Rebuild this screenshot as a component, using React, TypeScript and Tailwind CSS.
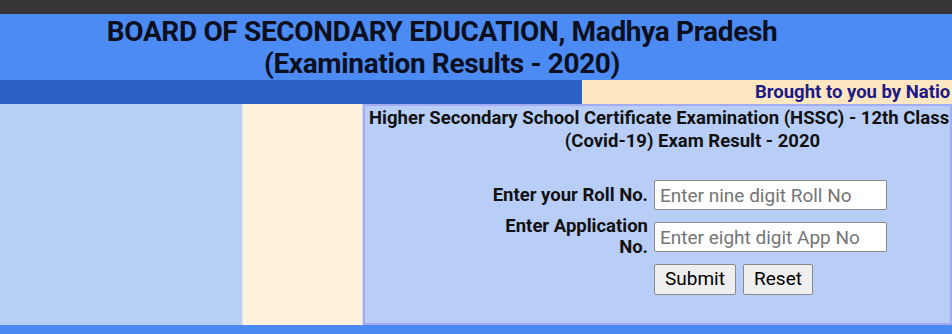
import React from 'react';

const font = { fontFamily: 'Roboto, "Noto Sans", Arial, sans-serif' };

const FormRow: React.FC<{ label: React.ReactNode; placeholder: string }> = ({ label, placeholder }) => (
  <div className="flex items-center gap-[6px]">
    <div className="w-[160px] text-right font-bold text-[18.5px] leading-[21px] text-[#111]">{label}</div>
    <input
      type="text"
      placeholder={placeholder}
      className="w-[233px] h-[30px] bg-white border border-[#8a8a8a] rounded-[2px] px-[5px] text-[19px] text-black placeholder:text-[#757575] outline-none"
    />
  </div>
);

export default function App() {
  return (
    <div className="w-[952px] h-[334px] overflow-hidden flex flex-col bg-[#b8cef6]" style={font}>
      {/* status strip */}
      <div className="h-[14px] bg-[#363638] shrink-0" />

      {/* heading */}
      <div className="h-[66px] shrink-0 bg-[#4c8bf3]">
        <div className="w-[884px] text-center font-bold text-[28px] leading-[32px] tracking-[-0.35px] text-[#0b0f1e] pt-[2px]">
          BOARD OF SECONDARY EDUCATION, Madhya Pradesh
          <br />
          (Examination Results - 2020)
        </div>
      </div>

      {/* ticker bar */}
      <div className="h-[24px] shrink-0 flex">
        <div className="w-[582px] bg-[#2c61c3]" />
        <div className="flex-1 bg-[#ffe7c1] overflow-hidden whitespace-nowrap pl-[173px] font-bold text-[18.5px] leading-[24px] text-[#1b1a86]">
          Brought to you by Natio
        </div>
      </div>

      {/* body */}
      <div className="h-[221px] shrink-0 flex">
        <div className="w-[242px] bg-[#b8cff6]" />
        <div className="w-[121px] bg-[#fff2dd] border-l border-[#dde4fb] border-r border-r-[#d2d9fb]" />
        <div className="flex-1 bg-[#b8cef6] border-2 border-[#a3acf2] overflow-hidden">
          <div className="font-bold text-[18.5px] leading-[23px] text-[#111] pt-[1px]">
            <div className="pl-[4px] whitespace-nowrap">
              Higher Secondary School Certificate Examination (HSSC) - 12th Class
            </div>
            <div className="w-[655px] text-center">(Covid-19) Exam Result - 2020</div>
          </div>

          <div className="ml-[123px] mt-[27px] flex flex-col gap-[6px]">
            <FormRow label="Enter your Roll No." placeholder="Enter nine digit Roll No" />
            <FormRow
              label={
                <>
                  Enter Application
                  <br />
                  No.
                </>
              }
              placeholder="Enter eight digit App No"
            />
            <div className="flex gap-[7px] pl-[166px]">
              <button className="h-[31px] w-[82px] bg-[#efefef] border border-[#8a8a8a] rounded-[2px] text-[19px] text-black">
                Submit
              </button>
              <button className="h-[31px] w-[70px] bg-[#efefef] border border-[#8a8a8a] rounded-[2px] text-[19px] text-black">
                Reset
              </button>
            </div>
          </div>
        </div>
      </div>

      <div className="flex-1 bg-[#4a89f2]" />
    </div>
  );
}
